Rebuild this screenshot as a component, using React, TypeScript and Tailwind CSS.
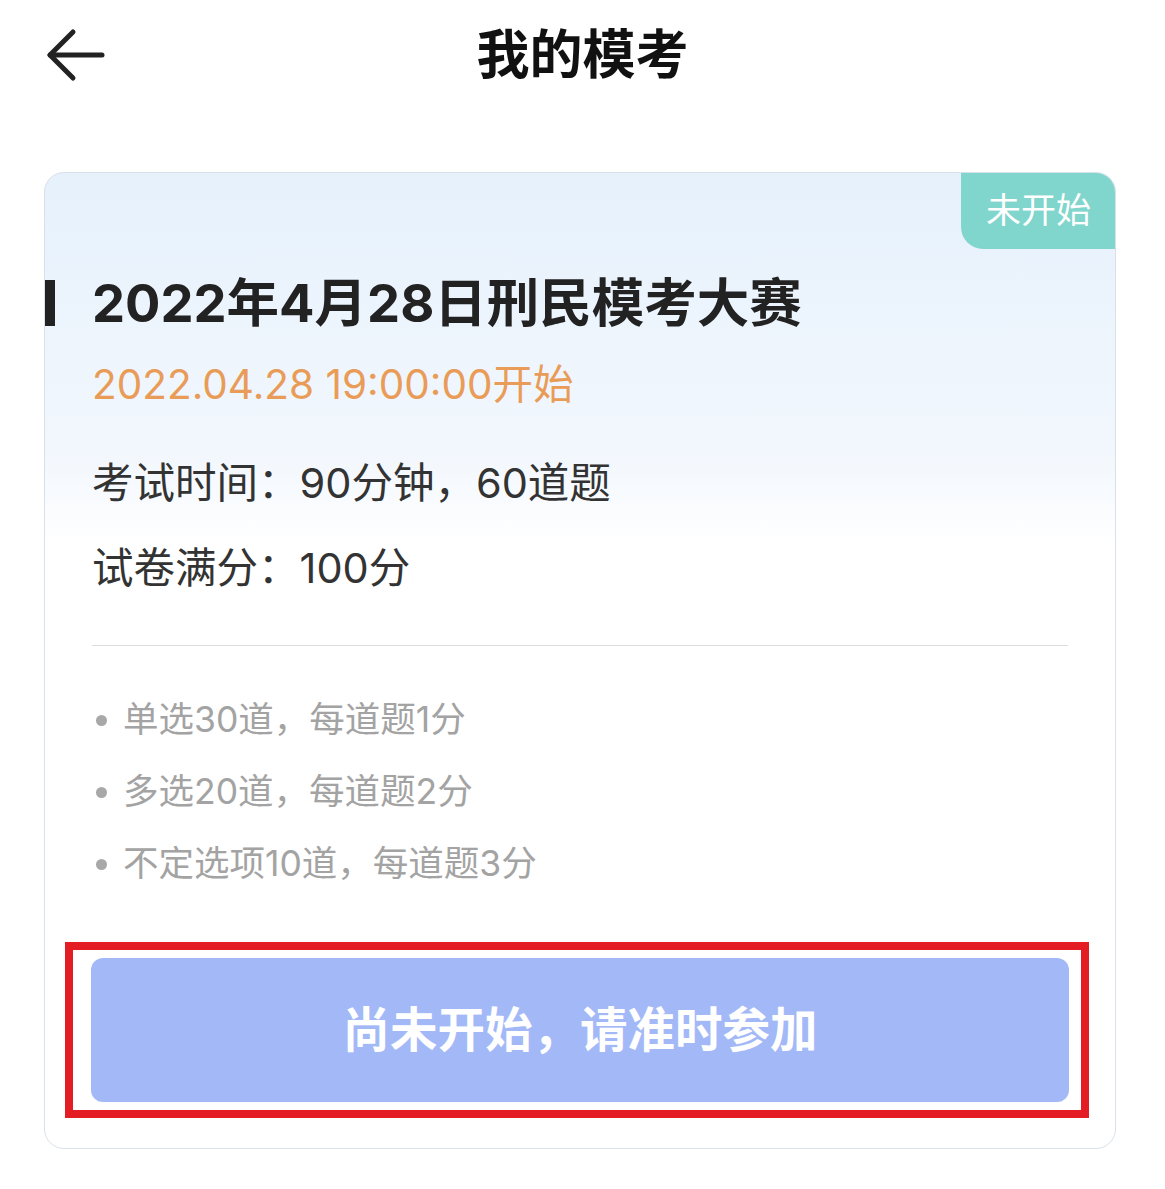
import React from "react";

const font = { fontFamily: 'Inter, "Noto Sans CJK SC", "Noto Sans", sans-serif' };

export default function App() {
  const bullets = ["单选30道，每道题1分", "多选20道，每道题2分", "不定选项10道，每道题3分"];
  return (
    <div className="w-[1165px] h-[1189px] bg-white" style={font}>
      <div className="grid grid-cols-[1fr_auto_1fr] items-center h-[110px]">
        <div className="pl-[44px] flex items-center">
          <svg width="62" height="56" viewBox="0 0 62 56" fill="none" stroke="#222" strokeWidth="5" strokeLinecap="round" strokeLinejoin="round">
            <path d="M29 5 L6 28 L29 51" />
            <path d="M6 28 L58 28" />
          </svg>
        </div>
        <div className="text-[53px] font-bold text-[#111] leading-none">我的模考</div>
        <div />
      </div>

      <div className="mt-[62px] ml-[44px] w-[1072px] relative rounded-[20px] border border-[#d8e1ea] overflow-hidden bg-[linear-gradient(180deg,#e6f1fc_0px,#f2f7fd_280px,#ffffff_370px)] pb-[46px]">
        <div className="absolute -top-px -right-px w-[155px] h-[77px] bg-[#80d5cc] rounded-tr-[20px] rounded-bl-[22px] flex items-center justify-center text-white text-[35px] leading-none">
          未开始
        </div>

        <div className="pt-[100px] flex items-center h-[160px] -ml-px">
          <div className="w-[11px] h-[46px] bg-[#222]" />
          <div className="ml-[37px] text-[52.5px] font-bold text-[#222] leading-[60px]">2022年4月28日刑民模考大赛</div>
        </div>

        <div className="px-[47px]">
          <div className="mt-[27px] text-[40.5px] leading-[50px] text-[#e99c58]">2022.04.28 19:00:00开始</div>
          <div className="mt-[48px] text-[41.5px] leading-[50px] text-[#333]">考试时间：90分钟，60道题</div>
          <div className="mt-[35px] text-[41.5px] leading-[50px] text-[#333]">试卷满分：100分</div>
          <div className="mt-[52px] h-px bg-[#dcdcdc]" />
          <div className="mt-[52px] flex flex-col gap-[28px]">
            {bullets.map((b) => (
              <div key={b} className="flex items-center h-[44px]">
                <div className="w-[11px] h-[11px] rounded-full bg-[#a8a8a8] ml-[4px]" />
                <div className="ml-[16px] text-[35.5px] leading-[44px] text-[#a3a3a3]">{b}</div>
              </div>
            ))}
          </div>
        </div>

        <div className="mt-[72px] px-[46px]">
          <div className="relative">
            <div className="h-[144px] rounded-[12px] bg-[#a3b9f7] flex items-center justify-center text-white text-[47.5px] font-bold leading-none">
              尚未开始，请准时参加
            </div>
            <div className="absolute -left-[26px] -right-[20px] -top-[16px] -bottom-[16px] border-[8px] border-[#e41d25] pointer-events-none" />
          </div>
        </div>
      </div>
    </div>
  );
}
